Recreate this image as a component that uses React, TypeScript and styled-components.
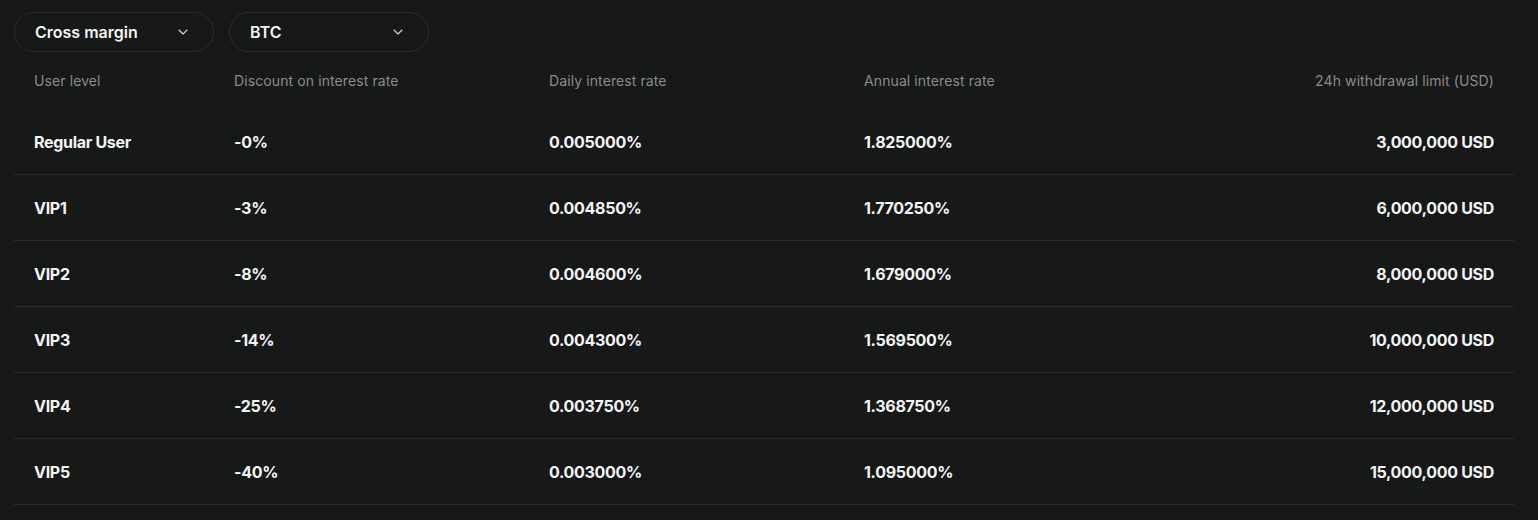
import { ChevronDown } from 'lucide-react';
import styled, { createGlobalStyle } from 'styled-components';

const GlobalStyle = createGlobalStyle`
  body {
    margin: 0;
    background-color: #171818;
    font-family: Inter, "Noto Sans", sans-serif;
    color: #f2f2f2;
  }
`;

const Page = styled.div`
  padding: 12px 24px 0 14px;
  min-height: 520px;
  box-sizing: border-box;
`;

const Toolbar = styled.div`
  display: flex;
  gap: 15px;
`;

const Select = styled.button`
  width: 200px;
  height: 40px;
  box-sizing: border-box;
  display: flex;
  align-items: center;
  justify-content: space-between;
  padding: 0 22px 0 20px;
  background: transparent;
  border: 1px solid #2c2d2d;
  border-radius: 20px;
  color: #f4f4f4;
  font-family: inherit;
  font-size: 16px;
  font-weight: 600;
  letter-spacing: 0;
  cursor: pointer;

  svg {
    color: #d8d8d8;
  }
`;

const Grid = styled.div`
  display: grid;
  grid-template-columns: 200px 315px 315px 315px 1fr;
`;

const HeadRow = styled(Grid)`
  height: 57px;
  align-items: center;
`;

const Row = styled(Grid)`
  height: 65px;
  align-items: center;
  border-bottom: 1px solid #2a2b2b;
`;

const Cell = styled.div<{ $right?: boolean }>`
  padding: 0 20px;
  text-align: ${(p) => (p.$right ? 'right' : 'left')};
  white-space: nowrap;
`;

const HeadCell = styled(Cell)`
  font-size: 14px;
  color: #8b8b8b;
  letter-spacing: 0.1px;
`;

const ValueCell = styled(Cell)`
  font-size: 16px;
  font-weight: 650;
  color: #f4f4f4;
  letter-spacing: -0.3px;
`;

const rows = [
  ['Regular User', '-0%', '0.005000%', '1.825000%', '3,000,000 USD'],
  ['VIP1', '-3%', '0.004850%', '1.770250%', '6,000,000 USD'],
  ['VIP2', '-8%', '0.004600%', '1.679000%', '8,000,000 USD'],
  ['VIP3', '-14%', '0.004300%', '1.569500%', '10,000,000 USD'],
  ['VIP4', '-25%', '0.003750%', '1.368750%', '12,000,000 USD'],
  ['VIP5', '-40%', '0.003000%', '1.095000%', '15,000,000 USD'],
];

const headers = [
  'User level',
  'Discount on interest rate',
  'Daily interest rate',
  'Annual interest rate',
  '24h withdrawal limit (USD)',
];

const App = () => (
  <>
    <GlobalStyle />
    <Page>
      <Toolbar>
        <Select>
          Cross margin
          <ChevronDown size={16} strokeWidth={1.6} />
        </Select>
        <Select>
          BTC
          <ChevronDown size={16} strokeWidth={1.6} />
        </Select>
      </Toolbar>
      <HeadRow>
        {headers.map((h, i) => (
          <HeadCell key={h} $right={i === 4}>
            {h}
          </HeadCell>
        ))}
      </HeadRow>
      {rows.map((r) => (
        <Row key={r[0]}>
          {r.map((v, i) => (
            <ValueCell key={i} $right={i === 4}>
              {v}
            </ValueCell>
          ))}
        </Row>
      ))}
    </Page>
  </>
);

export default App;
